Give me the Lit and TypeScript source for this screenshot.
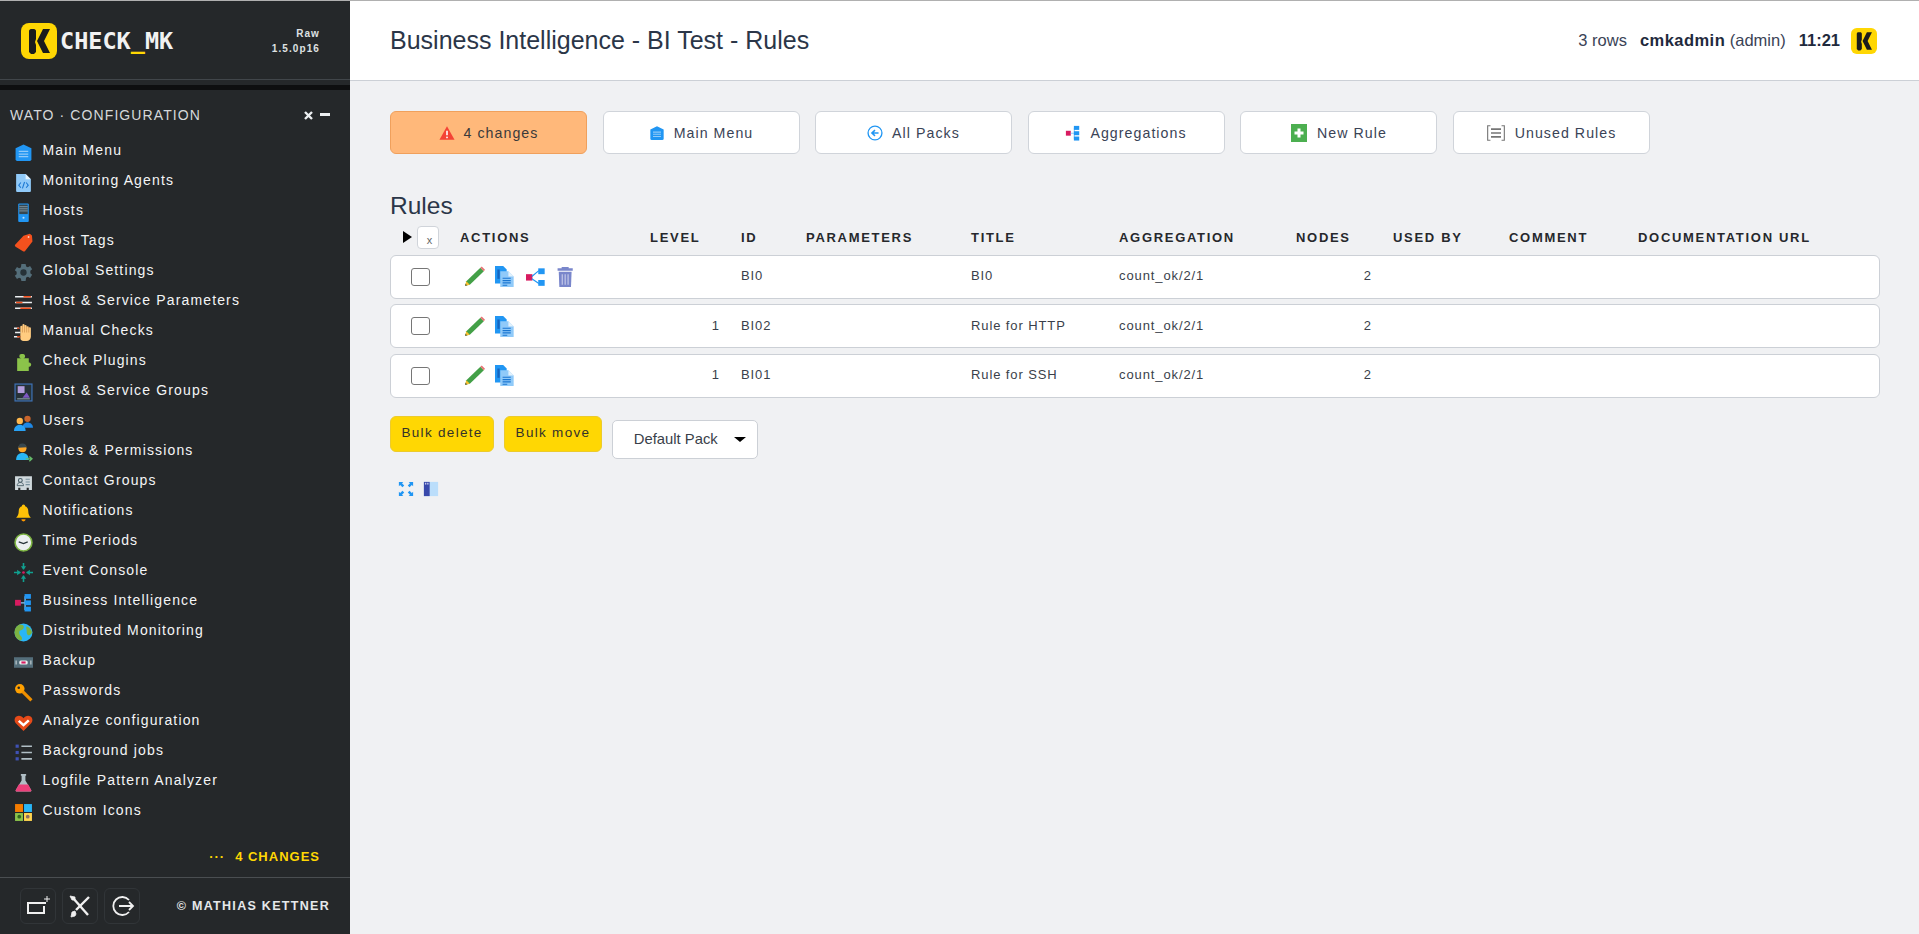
import { LitElement, css, html, svg } from 'lit';
import { customElement } from 'lit/decorators.js';

const logoMark = svg`
  <rect width="36" height="36" rx="8" fill="#ffd703"/>
  <path d="M8 8c0-1 1-2 2-2h3c1 0 2 1 2 2v8l-1 3 1 3v7l-2 2h-3l-2-2z" fill="#1b1c1c"/>
  <path d="M16 18l6-12h7l-6 12 6 12h-7z" fill="#1b1c1c"/>`;

const icons: Record<string, unknown> = {
  home: svg`<path d="M9 1.5l7.5 3.5v10.5a1.5 1.5 0 0 1-1.5 1.5H3a1.5 1.5 0 0 1-1.5-1.5V5z" fill="#2196f3"/><path d="M4.5 8h9M4.5 10.5h9M4.5 13h9" stroke="#90caf9" stroke-width="1.2"/>`,
  agent: svg`<path d="M2 1h9l5 5v11a1 1 0 0 1-1 1H3a1 1 0 0 1-1-1z" fill="#90caf9"/><path d="M11 1l5 5h-5z" fill="#e3f2fd"/><path d="M6.5 9l-2 2.5 2 2.5M11.5 9l2 2.5-2 2.5M10 8.5L8 14.5" stroke="#1976d2" stroke-width="1" fill="none"/>`,
  hosts: svg`<rect x="4" y="0.5" width="10" height="17.5" rx="1" fill="#2196f3"/><rect x="5" y="1.5" width="8" height="9" fill="#37474f"/><path d="M5 3.5h8M5 5.5h8M5 7.5h8" stroke="#90a4ae" stroke-width=".8"/><circle cx="9" cy="14" r="1" fill="#bbdefb"/>`,
  tags: svg`<path d="M9 2.5L15 .8l2 1.5.5 5.7-7 9a1.5 1.5 0 0 1-2 .3L1.5 13a1.5 1.5 0 0 1-.2-2.2z" fill="#f4511e"/><circle cx="13.8" cy="3.8" r=".9" fill="#ffccbc"/>`,
  gear: svg`<path d="M7 1h4l.5 2.2 1.7.8 2-1.1 2 3-1.7 1.5v2.2l1.7 1.5-2 3-2-1.1-1.7.8L11 17H7l-.5-2.2-1.7-.8-2 1.1-2-3 1.7-1.5V8.400L.8 6.900l2-3 2 1.100 1.700-.8z" fill="#546e7a"/><circle cx="9" cy="9" r="3" fill="#263238"/>`,
  params: svg`<path d="M1 3.5h16M1 9h16M1 14.5h16" stroke="#eceff1" stroke-width="1.5"/><path d="M9 3.5h7M2 9h6M6 14.5h10" stroke="#f4511e" stroke-width="1.5"/>`,
  hand: svg`<path d="M6 8V3.5a1 1 0 0 1 2 0V2a1 1 0 0 1 2 0v1a1 1 0 0 1 2 0v1a1 1 0 0 1 2 0v1a1 1 0 0 1 2 0v8a4 4 0 0 1-4 4H9a3 3 0 0 1-3-3z" fill="#ffcc80"/><path d="M8 3v6M10 2.5v6.5M12 3v6M14 4v5" stroke="#c98a48" stroke-width=".6"/><path d="M0 5h5M1 9h5M0 13h5" stroke="#eceff1" stroke-width="1.5"/><path d="M3 5h2M3 13h3" stroke="#d84315" stroke-width="1.5"/>`,
  plugin: svg`<path d="M3 5h4a2 2 0 0 1 0-4h1a2 2 0 0 1 1 4h5v4a2 2 0 0 1 2 3 2 2 0 0 1-2 1v4H3z" fill="#8bc34a"/>`,
  groups: svg`<rect x="1" y="1" width="16" height="16" fill="#263238" stroke="#3d6fb0" stroke-width="1.2"/><rect x="3.5" y="3" width="6.5" height="6.5" fill="#b39ddb"/><path d="M8 14l4-5 3 5z" fill="#7e57c2"/><path d="M3 15h12" stroke="#90a4ae"/>`,
  users: svg`<circle cx="12.8" cy="5.5" r="3" fill="#c8642c"/><path d="M8 14c0-3 2-5 4.8-5S18 11 18 14z" fill="#1e88e5"/><circle cx="5.5" cy="7.5" r="3" fill="#ffb74d"/><path d="M0 17c0-3.5 2.4-5.8 5.5-5.8s5.5 2.3 5.5 5.8z" fill="#29a2f5"/>`,
  roles: svg`<circle cx="8" cy="5" r="3.8" fill="#ffa726"/><path d="M4.2 4.5A3.8 3.8 0 0 1 11.8 4z" fill="#37474f"/><path d="M2 16c0-4 2.5-6.5 6-6.5s6 2.5 6 6.5z" fill="#29b6f6"/><path d="M11 15h5.5M14.5 12.8l2.5 2.2-2.5 2.2" stroke="#66bb6a" stroke-width="1.3" fill="none"/>`,
  contact: svg`<path d="M1 3h16v13h-3v-2h-2v2H6v-2H4v2H1z" fill="#cfd8dc"/><circle cx="6" cy="7" r="1.8" fill="none" stroke="#455a64"/><path d="M3 12c0-2 1.2-3 3-3s3 1 3 3z" fill="none" stroke="#455a64" stroke-width=".8"/><path d="M11 6h4M11 8.5h4M11 11h4" stroke="#78909c"/>`,
  bell: svg`<path d="M9 1.5c-1 0-1.5.7-1.5 1.500-2 .7-3 2.500-3 4.500 0 3-1 5-2.500 6.500h14c-1.500-1.500-2.500-3.500-2.500-6.500 0-2-1-3.800-3-4.500 0-.8-.5-1.500-1.500-1.500z" fill="#ffc107"/><path d="M7 15.5a2 2 0 0 0 4 0z" fill="#ff9800"/>`,
  clock: svg`<circle cx="9" cy="9" r="8" fill="#eceff1" stroke="#7cb342" stroke-width="1.5"/><path d="M4.5 8.5L9 10l4-1.5" stroke="#263238" stroke-width="1.3" fill="none"/>`,
  event: svg`<path d="M9 0v6M9 12v6M0 9h6M12 9h6" stroke="#10a090" stroke-width="1.5"/><path d="M6.5 3L9 6.5 11.5 3zM6.5 15L9 11.5 11.5 15zM3 6.5L6.5 9 3 11.5zM15 6.5L11.5 9 15 11.5z" fill="#10a090"/><circle cx="9" cy="9" r="1.3" fill="#d81b60"/>`,
  bi: svg`<rect x="1" y="6.5" width="5.5" height="5.5" fill="#d81b60"/><path d="M6.5 9.3h4M10.5 3v13" stroke="#90caf9" stroke-width="1.2"/><rect x="10" y="1" width="6" height="4.5" fill="#2196f3"/><rect x="10" y="7" width="6" height="4.5" fill="#2196f3"/><rect x="10" y="13" width="6" height="4.5" fill="#2196f3"/>`,
  globe: svg`<circle cx="9" cy="9" r="8.5" fill="#29b6f6"/><path d="M5 1.5c3 0 5 1 4 3.5S5 6 5 9s2 3 2.5 5-1 3-2 2.5C2 15 .5 12 .5 9 .5 5.5 2 3 5 1.5zM12 3c2.5 1 5 3.5 5 6 0 1-2 3-3.5 2.5S12 9 12 7s-1-2 0-4z" fill="#7cb342"/>`,
  backup: svg`<rect x="0" y="4" width="18" height="10" fill="#546e7a"/><rect x="5" y="7" width="8" height="4" rx="1.5" fill="#eceff1"/><rect x="7" y="8" width="4" height="2" fill="#d81b60"/><path d="M2 7v4M16 7v4" stroke="#cfd8dc"/>`,
  key: svg`<circle cx="5.5" cy="5.5" r="4.5" fill="#ffa000"/><path d="M8 8l8.500 8.500" stroke="#ef8f00" stroke-width="3"/><circle cx="4.5" cy="4.5" r="1.2" fill="#25282a"/>`,
  heart: svg`<path d="M9 17L1.5 9.5C-.5 7 .7 2.5 4.5 2.5 6.5 2.5 8 3.5 9 5c1-1.5 2.5-2.5 4.5-2.5 3.8 0 5 4.5 3 7z" fill="#e64a19"/><path d="M4.5 7.5L9 11.5l5-4.500" stroke="#fff" stroke-width="2.4" fill="none"/>`,
  jobs: svg`<path d="M7 3h10M7 9h10M7 15h10" stroke="#b0bec5" stroke-width="1.5"/><rect x="1.5" y="1.5" width="3" height="3" fill="#3f51b5"/><rect x="1.5" y="7.5" width="3" height="3" fill="#3f51b5"/><rect x="1.5" y="13.5" width="3" height="3" fill="#3f51b5"/>`,
  flask: svg`<path d="M6.5 1h5v1.5h-.7V7l5.500 9a1 1 0 0 1-.9 1.500H2.600a1 1 0 0 1-.9-1.500l5.500-9V2.500h-.7z" fill="#b0bec5"/><path d="M4.500 11h9l3 5.500a1 1 0 0 1-.9 1H2.400a1 1 0 0 1-.9-1z" fill="#ec407a"/>`,
  custom: svg`<rect x="1" y="1" width="7.5" height="7.5" fill="#f57c00"/><rect x="9.5" y="1" width="7.5" height="7.5" fill="#29b6f6"/><rect x="1" y="9.5" width="7.5" height="7.5" fill="#8bc34a"/><rect x="9.5" y="9.5" width="7.5" height="7.5" fill="#ffd54f"/><circle cx="5" cy="13" r="1.8" fill="#33691e"/><circle cx="13" cy="13" r="1.8" fill="#8d6e63"/>`,
  warn: svg`<path d="M9 1.5l8.5 15h-17z" fill="#f44336"/><path d="M9 6.5v5" stroke="#fff" stroke-width="1.8"/><circle cx="9" cy="14" r="1" fill="#fff"/>`,
  back: svg`<circle cx="9" cy="9" r="7.8" fill="#fff" stroke="#2196f3" stroke-width="1.5"/><path d="M13 9H6M9 5.8L5.5 9 9 12.2" stroke="#2196f3" stroke-width="1.7" fill="none"/>`,
  add: svg`<rect x="1" y="0" width="16" height="18" fill="#4caf50"/><path d="M9 4.5v9M4.5 9h9" stroke="#fff" stroke-width="3"/>`,
  unused: svg`<path d="M4 2.5H1.5v13H4M14 2.5h2.500v13H14" stroke="#757575" fill="none"/><path d="M4.5 5.5h9M4.5 9h9M4.5 12.5h9" stroke="#757575" stroke-width="1.5"/>`,
  edit: svg`<path d="M1 17l1-4L14 1.5l3 3L5 16z" fill="#43a047"/><path d="M14 1.5l1.2-1 2.8 2.8-1 1.2z" fill="#e57373"/><path d="M1 17l1-4 3 3z" fill="#fbc02d"/><path d="M1 17l.4-1.6 1.2 1.2z" fill="#263238"/>`,
  clone: svg`<path d="M0 0h7l3 3v12H0z" fill="#2196f3"/><path d="M2 3h2v8H2z" fill="#1565c0"/><path d="M4.500 4.500h7l4.500 4.500v9H4.500z" fill="#90caf9"/><path d="M11.500 4.500l4.500 4.500h-4.500z" fill="#e3f2fd"/><path d="M6.500 10.500h7M6.500 12.500h7M6.500 14.500h7M6.500 16.500h4" stroke="#1976d2"/>`,
  tree: svg`<rect x="0" y="7" width="5.500" height="5.500" fill="#d81b60"/><rect x="10.500" y="2" width="5.500" height="5" fill="#2196f3"/><rect x="10.500" y="12" width="5.500" height="5" fill="#2196f3"/><path d="M5 9l6-5M5 11l6 4" stroke="#2196f3" stroke-width="1"/>`,
  trash: svg`<g transform="translate(-2 0)"><path d="M6 2V.8h6V2h3.500v2h-13V2z" fill="#7986cb"/><path d="M3.500 5h11L14 18H4z" fill="#7986cb"/><path d="M6.500 7v9M9 7v9M11.500 7v9" stroke="#c5cae9"/></g>`,
  expand: svg`<path d="M1 1h5L4.500 2.500 7 5 5 7 2.500 4.500 1 6zM17 1v5l-1.500-1.500L13 7l-2-2 2.500-2.500L12 1zM1 17v-5l1.500 1.500L5 11l2 2-2.500 2.500L6 17zM17 17h-5l1.500-1.500L11 13l2-2 2.500 2.500L17 12z" fill="#2196f3"/>`,
  panel: svg`<rect x="1" y="1" width="16" height="16" fill="#bbdefb"/><rect x="1" y="1" width="6.500" height="16" fill="#3949ab"/><rect x="2.200" y="2" width="1.500" height="2" fill="#c5cae9"/><rect x="4.700" y="2" width="1.500" height="2" fill="#c5cae9"/>`,
};

const icon = (name: string) => html`<svg class="ic ic-${name}" viewBox="0 0 18 18">${icons[name]}</svg>`;

const menu = [
  ['home', 'Main Menu'], ['agent', 'Monitoring Agents'], ['hosts', 'Hosts'], ['tags', 'Host Tags'],
  ['gear', 'Global Settings'], ['params', 'Host & Service Parameters'], ['hand', 'Manual Checks'],
  ['plugin', 'Check Plugins'], ['groups', 'Host & Service Groups'], ['users', 'Users'],
  ['roles', 'Roles & Permissions'], ['contact', 'Contact Groups'], ['bell', 'Notifications'],
  ['clock', 'Time Periods'], ['event', 'Event Console'], ['bi', 'Business Intelligence'],
  ['globe', 'Distributed Monitoring'], ['backup', 'Backup'], ['key', 'Passwords'],
  ['heart', 'Analyze configuration'], ['jobs', 'Background jobs'], ['flask', 'Logfile Pattern Analyzer'],
  ['custom', 'Custom Icons'],
];

const topButtons = [
  ['home', 'Main Menu'], ['back', 'All Packs'], ['bi', 'Aggregations'], ['add', 'New Rule'], ['unused', 'Unused Rules'],
];

const columns = ['ACTIONS', 'LEVEL', 'ID', 'PARAMETERS', 'TITLE', 'AGGREGATION', 'NODES', 'USED BY', 'COMMENT', 'DOCUMENTATION URL'];

const rules = [
  { level: '', id: 'BI0', title: 'BI0', aggr: 'count_ok/2/1', nodes: '2', actions: ['edit', 'clone', 'tree', 'trash'] },
  { level: '1', id: 'BI02', title: 'Rule for HTTP', aggr: 'count_ok/2/1', nodes: '2', actions: ['edit', 'clone'] },
  { level: '1', id: 'BI01', title: 'Rule for SSH', aggr: 'count_ok/2/1', nodes: '2', actions: ['edit', 'clone'] },
];

@customElement('app-root')
export class AppRoot extends LitElement {
  static override styles = css`
    :host {
      display: flex;
      height: 934px;
      overflow: hidden;
      font-family: 'Liberation Sans', Arial, sans-serif;
      border-top: 1px solid #b0b0b0;
      box-sizing: border-box;
      background: #f0f1f3;
    }

    svg { display: block; flex: none; }

    /* sidebar */
    .side {
      width: 350px;
      flex: none;
      background: #25282a;
      color: #fff;
      display: flex;
      flex-direction: column;
    }
    .brand {
      height: 79px;
      box-sizing: border-box;
      border-bottom: 1px solid #41464a;
      display: flex;
      align-items: center;
      padding: 4px 30px 2px 21px;
    }
    .brand .mark { width: 36px; height: 36px; margin-right: 3px; }
    .word {
      font-family: 'DejaVu Sans Mono', monospace;
      font-weight: 700;
      font-size: 23.5px;
      color: #f2f2f2;
      flex: 1;
    }
    .word i { font-style: normal; color: #ffd703; }
    .ver {
      text-align: right;
      font-size: 10px;
      font-weight: 700;
      letter-spacing: 1.1px;
      line-height: 15px;
      color: #dfe1e2;
    }
    .band { height: 5px; margin-top: 5px; background: #0e0f10; }
    .wato {
      display: flex;
      align-items: center;
      justify-content: space-between;
      padding: 0 20px 0 10px;
      height: 40px;
      margin-top: 5px;
      font-size: 14px;
      letter-spacing: 1.1px;
      color: #d5d8da;
    }
    .wato-ctl { display: flex; align-items: center; gap: 7px; }
    .wato-ctl svg { width: 9px; height: 9px; }
    .wato-ctl b { display: block; width: 10px; height: 3px; background: #eceff1; margin-top: -2px; }
    .menu { display: flex; flex-direction: column; flex: 1; }
    .menu a {
      height: 30px;
      display: flex;
      align-items: center;
      padding-left: 14px;
      gap: 9.5px;
      font-size: 14px;
      letter-spacing: 1.15px;
      color: #f4f5f6;
    }
    .menu .ic { width: 19px; height: 19px; margin-top: 5px; }
    .pending {
      display: flex;
      justify-content: flex-end;
      gap: 10px;
      padding: 0 30px 13px 0;
      font-size: 13px;
      font-weight: 700;
      letter-spacing: 1px;
      color: #ffd703;
    }
    .foot {
      height: 57px;
      box-sizing: border-box;
      border-top: 1px solid #4a4e51;
      display: flex;
      align-items: center;
      padding: 0 20px;
    }
    .tool {
      width: 36px;
      height: 36px;
      box-sizing: border-box;
      border: 1px solid #313538;
      border-radius: 6px;
      margin-right: 6px;
      display: flex;
      align-items: center;
      justify-content: center;
    }
    .tool svg { width: 26px; height: 26px; }
    .copy {
      margin-left: auto;
      font-size: 12.5px;
      font-weight: 700;
      letter-spacing: 1.3px;
      color: #e6e8ea;
    }

    /* main */
    .main { flex: 1; min-width: 0; display: flex; flex-direction: column; }
    .top {
      height: 80px;
      box-sizing: border-box;
      flex: none;
      background: #fff;
      border-bottom: 1px solid #ccd0d6;
      display: flex;
      align-items: center;
      padding: 0 42px 0 40px;
      color: #1f2a3d;
    }
    .top h1 { flex: 1; margin: 0; font-size: 25px; font-weight: 400; color: #2b3648; }
    .top .info { font-size: 16.5px; color: #3a4356; }
    .top .info b { color: #1f2a3d; }
    .top .info .user b { letter-spacing: .45px; }
    .top .info span + span { margin-left: 13px; }
    .top .mark { width: 26px; height: 26px; margin-left: 11px; }
    .body { padding: 30px 39px 0 40px; }

    .btns { display: flex; gap: 15.5px; }
    .btn {
      width: 197px;
      height: 43px;
      box-sizing: border-box;
      background: #fff;
      border: 1px solid #d0d4da;
      border-radius: 6px;
      display: flex;
      align-items: center;
      justify-content: center;
      gap: 9px;
      font-size: 14.2px;
      letter-spacing: 1.05px;
      color: #3a4356;
    }
    .btn .ic { width: 16px; height: 16px; }
    .btn .ic-add { width: 18px; height: 18px; }
    .btn .ic-unused { width: 20px; height: 20px; }
    .btn.warn { background: #ffb87a; border-color: #f0a05c; color: #3a3a3a; }

    h2 {
      margin: 35px 0 0;
      font-size: 24.5px;
      font-weight: 400;
      line-height: 34px;
      color: #2b3648;
    }
    .grid {
      display: grid;
      grid-template-columns: 70px 190px 91px 65px 165px 148px 177px 97px 116px 129px 1fr;
      align-items: center;
    }
    .head {
      height: 24px;
      margin-top: 2px;
      font-size: 13px;
      font-weight: 700;
      letter-spacing: 1.7px;
      color: #26282c;
    }
    .toggle { display: flex; align-items: center; padding-left: 13px; }
    .tri {
      width: 0;
      height: 0;
      border-left: 9px solid #000;
      border-top: 6px solid transparent;
      border-bottom: 6px solid transparent;
      margin-right: 5px;
    }
    .xbox {
      width: 22px;
      height: 23px;
      box-sizing: border-box;
      background: #fff;
      border: 1px solid #d0d4da;
      border-radius: 4px;
      font-size: 11px;
      font-weight: 400;
      letter-spacing: 0;
      color: #666;
      text-align: center;
      line-height: 26px;
      padding-left: 3px;
    }
    .row {
      height: 44px;
      box-sizing: border-box;
      margin-top: 5.5px;
      padding-bottom: 2px;
      grid-template-columns: 69px 190px 91px 65px 165px 148px 177px 97px 116px 129px 1fr;
      background: #fff;
      border: 1px solid #ccd0d6;
      border-radius: 6px;
      font-size: 13px;
      letter-spacing: .9px;
      color: #3a3f4a;
    }
    .check {
      width: 19px;
      height: 18px;
      box-sizing: border-box;
      border: 1.5px solid #767676;
      border-radius: 3px;
      background: #fff;
      margin: 2px 0 0 20px;
    }
    .acts { display: flex; gap: 10px; padding-left: 4px; margin-top: 2px; }
    .acts .ic { width: 21px; height: 21px; }
    .num { text-align: right; padding-right: 21px; }

    .bulk { display: flex; align-items: flex-start; gap: 10px; margin-top: 18px; }
    .y {
      height: 36px;
      padding: 0 10.5px;
      box-sizing: border-box;
      background: #ffd703;
      border: 1px solid #eccb2c;
      border-radius: 6px;
      font-size: 13.5px;
      letter-spacing: 1.3px;
      line-height: 32px;
      color: #33322a;
    }
    .sel {
      margin-top: 4px;
      width: 146px;
      height: 39px;
      box-sizing: border-box;
      background: #fff;
      border: 1px solid #ccd0d6;
      border-radius: 5px;
      display: flex;
      align-items: center;
      justify-content: space-between;
      padding: 0 11px 0 21px;
      font-size: 14.8px;
      color: #3a3f4a;
    }
    .caret {
      width: 0;
      height: 0;
      border-top: 5px solid #000;
      border-left: 6.5px solid transparent;
      border-right: 6.5px solid transparent;
    }
    .foot-ic { display: flex; gap: 9px; margin: 22px 0 0 8px; }
    .foot-ic .ic { width: 16px; height: 16px; }
  `;

  private mark() {
    return html`<svg class="mark" viewBox="0 0 36 36">${logoMark}</svg>`;
  }

  protected override render() {
    return html`
      <aside class="side">
        <div class="brand">
          ${this.mark()}
          <span class="word">CHECK<i>_</i>MK</span>
          <div class="ver">Raw<br />1.5.0p16</div>
        </div>
        <div class="band"></div>
        <div class="wato">
          <span>WATO · CONFIGURATION</span>
          <span class="wato-ctl">
            <svg viewBox="0 0 9 9"><path d="M1 1l7 7M8 1L1 8" stroke="#eceff1" stroke-width="2.4"/></svg>
            <b></b>
          </span>
        </div>
        <nav class="menu">
          ${menu.map(([ic, label]) => html`<a>${icon(ic)}<span>${label}</span></a>`)}
        </nav>
        <div class="pending"><span>···</span><span>4 CHANGES</span></div>
        <div class="foot">
          <span class="tool"><svg viewBox="0 0 26 26" fill="none" stroke="#f0f0f0"><path d="M21 10H3v10h16v-7" stroke-width="2"/><path d="M22 3v6M19 6h6" stroke-width="1"/></svg></span>
          <span class="tool"><svg viewBox="0 0 26 26" fill="none" stroke="#f0f0f0"><path d="M6 5l15 17" stroke-width="2.4"/><path d="M22 4L9 17" stroke-width="2.4"/><path d="M4 24l1-5 3-1 1 3-1 2z" fill="#f0f0f0" stroke-width=".8"/><path d="M3 3l5 1v3H5z" fill="#f0f0f0" stroke-width=".8"/></svg></span>
          <span class="tool"><svg viewBox="0 0 26 26" fill="none" stroke="#f0f0f0" stroke-width="1.8"><path d="M20 7a9 9 0 1 0 0 12"/><path d="M10 13h14M20 9l4 4-4 4"/></svg></span>
          <span class="copy">© MATHIAS KETTNER</span>
        </div>
      </aside>
      <main class="main">
        <header class="top">
          <h1>Business Intelligence - BI Test - Rules</h1>
          <div class="info"><span>3 rows</span><span class="user"><b>cmkadmin</b> (admin)</span><span><b>11:21</b></span></div>
          ${this.mark()}
        </header>
        <div class="body">
          <div class="btns">
            <div class="btn warn">${icon('warn')}<span>4 changes</span></div>
            ${topButtons.map(([ic, label]) => html`<div class="btn">${icon(ic)}<span>${label}</span></div>`)}
          </div>
          <h2>Rules</h2>
          <div class="grid head">
            <div class="toggle"><span class="tri"></span><span class="xbox">x</span></div>
            ${columns.map((c) => html`<div>${c}</div>`)}
          </div>
          ${rules.map((r) => html`
            <div class="grid row">
              <div class="check"></div>
              <div class="acts">${r.actions.map((a) => icon(a))}</div>
              <div class="num">${r.level}</div>
              <div>${r.id}</div>
              <div></div>
              <div>${r.title}</div>
              <div>${r.aggr}</div>
              <div class="num">${r.nodes}</div>
              <div></div><div></div><div></div>
            </div>
          `)}
          <div class="bulk">
            <div class="y">Bulk delete</div>
            <div class="y">Bulk move</div>
            <div class="sel"><span>Default Pack</span><span class="caret"></span></div>
          </div>
          <div class="foot-ic">${icon('expand')}${icon('panel')}</div>
        </div>
      </main>
    `;
  }
}
